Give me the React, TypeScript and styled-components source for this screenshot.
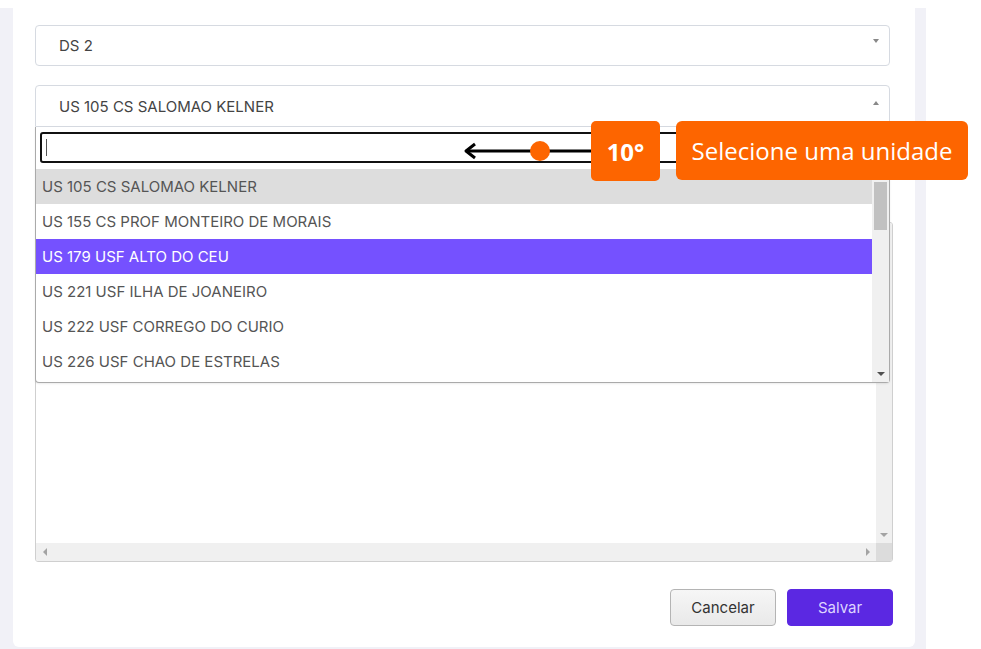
import styled, { createGlobalStyle } from "styled-components";

const GlobalStyle = createGlobalStyle`
  html, body {
    margin: 0;
    padding: 0;
    background: #ffffff;
  }
  * { box-sizing: border-box; }
`;

const Page = styled.div`
  position: relative;
  width: 981px;
  height: 649px;
  overflow: hidden;
  font-family: Inter, "Liberation Sans", sans-serif;
`;

const Shell = styled.div`
  margin-top: 8px;
  width: 926px;
  background: #f1f1f7;
  padding: 0 11px 2px 13px;
`;

const Card = styled.div`
  position: relative;
  background: #ffffff;
  height: 639px;
  border-radius: 0 0 6px 6px;
  padding: 17px 22px 21px 22px;
  display: flex;
  flex-direction: column;
`;

const SelectWrap = styled.div<{ $gap?: number }>`
  position: relative;
  margin-top: ${(p) => p.$gap ?? 0}px;
  margin-right: 3px;
`;

const SelectBox = styled.div<{ $open?: boolean }>`
  height: ${(p) => (p.$open ? 42 : 41)}px;
  border: 1px solid #d6dae1;
  border-radius: ${(p) => (p.$open ? "4px 4px 0 0" : "4px")};
  display: flex;
  align-items: center;
  padding: 0 10px 0 23px;
  font-size: 15px;
  color: #444;
`;

const SelectText = styled.span`
  flex: 1;
`;

const Caret = styled.span<{ $up?: boolean }>`
  width: 0;
  height: 0;
  border-left: 3px solid transparent;
  border-right: 3px solid transparent;
  ${(p) =>
    p.$up
      ? "border-bottom: 4px solid #888; margin-top: -6px;"
      : "border-top: 4px solid #888; margin-top: -10px;"}
`;

const Dropdown = styled.div`
  position: absolute;
  left: 0;
  right: 0;
  top: 42px;
  background: #fff;
  border: 1px solid #aaa;
  border-top: none;
  border-radius: 0 0 4px 4px;
  box-shadow: 0 1px 2px rgba(0, 0, 0, 0.08);
  z-index: 2;
`;

const SearchRow = styled.div`
  padding: 5px 5px 6px 4px;
`;

const SearchInput = styled.div`
  height: 31px;
  border: 2px solid #111;
  border-radius: 3px;
  display: flex;
  align-items: center;
  padding-left: 4px;
`;

const TextCursor = styled.span`
  width: 1px;
  height: 17px;
  background: #555;
`;

const ListArea = styled.div`
  display: grid;
  grid-template-columns: 1fr 17px;
  height: 213px;
`;

const OptionList = styled.div`
  overflow: hidden;
`;

const Option = styled.div<{ $state?: "selected" | "hover" }>`
  height: 35px;
  display: flex;
  align-items: center;
  padding-left: 6px;
  font-size: 15px;
  color: ${(p) => (p.$state === "hover" ? "#ffffff" : "#555")};
  background: ${(p) =>
    p.$state === "selected" ? "#dddddd" : p.$state === "hover" ? "#7551ff" : "transparent"};
`;

const ScrollTrack = styled.div<{ $dir?: "v" | "h" }>`
  background: #f0f0f0;
  display: flex;
  flex-direction: ${(p) => (p.$dir === "h" ? "row" : "column")};
  align-items: center;
  justify-content: space-between;
  padding: ${(p) => (p.$dir === "h" ? "0 6px 0 7px" : "4px 0 6px")};
`;

const Thumb = styled.div`
  width: 13px;
  height: 48px;
  background: #c1c1c1;
  margin-top: 5px;
  margin-bottom: auto;
`;

const Arrow = styled.span<{ $dir: "up" | "down" | "left" | "right"; $c?: string }>`
  width: 0;
  height: 0;
  ${({ $dir, $c = "#a3a3a3" }) =>
    $dir === "up"
      ? `border-left:4px solid transparent;border-right:4px solid transparent;border-bottom:4px solid ${$c};`
      : $dir === "down"
      ? `border-left:4px solid transparent;border-right:4px solid transparent;border-top:4px solid ${$c};`
      : $dir === "left"
      ? `border-top:4px solid transparent;border-bottom:4px solid transparent;border-right:4px solid ${$c};`
      : `border-top:4px solid transparent;border-bottom:4px solid transparent;border-left:4px solid ${$c};`}
`;

const FieldBox = styled.div`
  margin-top: 95px;
  height: 341px;
  border: 1px solid #cfcfcf;
  border-radius: 3px;
  display: grid;
  grid-template-columns: 1fr 16px;
  grid-template-rows: 1fr 18px;
  overflow: hidden;
`;

const FieldBody = styled.div`
  background: #fff;
`;

const Corner = styled.div`
  background: #dcdcdc;
`;

const Actions = styled.div`
  margin-top: 27px;
  display: flex;
  justify-content: flex-end;
  gap: 11px;
`;

const Button = styled.button<{ $primary?: boolean }>`
  width: 106px;
  height: 37px;
  border-radius: 4px;
  font-family: Inter, "Liberation Sans", sans-serif;
  font-size: 15px;
  cursor: pointer;
  ${(p) =>
    p.$primary
      ? "background:#5b28e2;border:1px solid #5b28e2;color:#ddd4ff;"
      : "background:linear-gradient(#f6f6f6,#e9e9e9);border:1px solid #b4b4b4;color:#333;"}
`;

const Callout = styled.div`
  position: absolute;
  top: 121px;
  left: 463px;
  display: flex;
  align-items: center;
  z-index: 5;
  font-family: "Open Sans", "Liberation Sans", sans-serif;
`;

const Pointer = styled.svg`
  display: block;
`;

const Badge = styled.div<{ $step?: boolean }>`
  height: ${(p) => (p.$step ? 60 : 59)}px;
  background: #fd6500;
  color: #fff;
  border-radius: ${(p) => (p.$step ? 5 : 6)}px;
  display: flex;
  align-items: center;
  justify-content: center;
  font-size: 24px;
  font-weight: ${(p) => (p.$step ? 700 : 400)};
  width: ${(p) => (p.$step ? "69px" : "292px")};
  margin-left: ${(p) => (p.$step ? 0 : 16)}px;
  align-self: flex-start;
`;

const options = [
  "US 105 CS SALOMAO KELNER",
  "US 155 CS PROF MONTEIRO DE MORAIS",
  "US 179 USF ALTO DO CEU",
  "US 221 USF ILHA DE JOANEIRO",
  "US 222 USF CORREGO DO CURIO",
  "US 226 USF CHAO DE ESTRELAS",
];

export default function App() {
  return (
    <Page>
      <GlobalStyle />
      <Shell>
        <Card>
          <SelectWrap>
            <SelectBox>
              <SelectText>DS 2</SelectText>
              <Caret />
            </SelectBox>
          </SelectWrap>

          <SelectWrap $gap={19}>
            <SelectBox $open>
              <SelectText>US 105 CS SALOMAO KELNER</SelectText>
              <Caret $up />
            </SelectBox>
            <Dropdown>
              <SearchRow>
                <SearchInput>
                  <TextCursor />
                </SearchInput>
              </SearchRow>
              <ListArea>
                <OptionList>
                  {options.map((o, i) => (
                    <Option key={o} $state={i === 0 ? "selected" : i === 2 ? "hover" : undefined}>
                      {o}
                    </Option>
                  ))}
                </OptionList>
                <ScrollTrack>
                  <Arrow $dir="up" $c="#505050" />
                  <Thumb />
                  <Arrow $dir="down" $c="#505050" />
                </ScrollTrack>
              </ListArea>
            </Dropdown>
          </SelectWrap>

          <FieldBox>
            <FieldBody />
            <ScrollTrack>
              <span />
              <Arrow $dir="down" />
            </ScrollTrack>
            <ScrollTrack $dir="h">
              <Arrow $dir="left" />
              <Arrow $dir="right" />
            </ScrollTrack>
            <Corner />
          </FieldBox>

          <Actions>
            <Button>Cancelar</Button>
            <Button $primary>Salvar</Button>
          </Actions>
        </Card>
      </Shell>

      <Callout>
        <Pointer width="128" height="60" viewBox="0 0 128 60">
          <line x1="3" y1="30" x2="128" y2="30" stroke="#000" strokeWidth="3" />
          <polyline points="12,23 3,30 12,37" fill="none" stroke="#000" strokeWidth="3" strokeLinejoin="round" />
          <circle cx="77" cy="30" r="10" fill="#fd6500" />
        </Pointer>
        <Badge $step>10°</Badge>
        <Badge>Selecione uma unidade</Badge>
      </Callout>
    </Page>
  );
}
